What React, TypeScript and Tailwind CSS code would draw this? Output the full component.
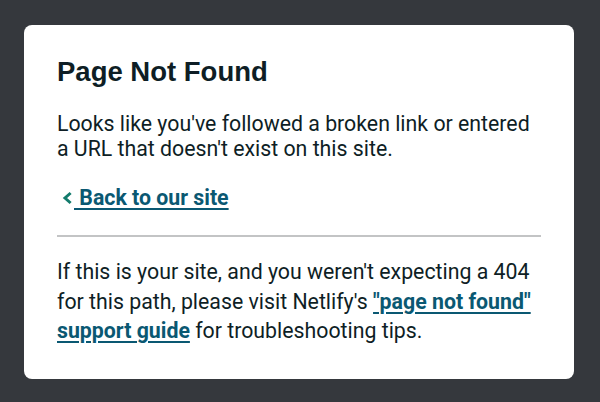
import React from 'react';

const App = () => {
  return (
    <div className="min-h-[402px] w-full bg-[#35383d] pl-6 pr-[26px] pt-[25px] pb-[22px]">
      <div className="rounded-lg bg-white px-[33px] pt-[31px] pb-[33px] text-[#0e1e25]">
        <h1 className="text-[27.5px] font-bold leading-8 font-['Liberation_Sans',Arial,sans-serif]">
          Page Not Found
        </h1>
        <p className="mt-[23px] text-[21.3px] leading-[25px] font-['Roboto',sans-serif]">
          Looks like you've followed a broken link or entered a URL that doesn't exist on this site.
        </p>
        <p className="mt-[23px] text-[21.3px] leading-[26px] font-['Roboto',sans-serif]">
          <a href="/" className="inline-flex items-center font-bold text-[#0a5872]">
            <svg className="ml-[4px] mr-[2px] h-[12px] w-[11px] overflow-visible" viewBox="0 0 11 12" fill="none">
              <path d="M8.5 2L4 6L8.5 10" stroke="#137b6c" strokeWidth="3" strokeLinecap="square" />
            </svg>
            <span className="underline decoration-2 underline-offset-[3px]">&nbsp;Back to our site</span>
          </a>
        </p>
        <hr className="mt-[24px] border-t-2 border-[#c3c4c5]" />
        <p className="mt-[20px] text-[21.3px] leading-[29.5px] font-['Roboto',sans-serif]">
          If this is your site, and you weren't expecting a 404 for this path, please visit Netlify's{' '}
          <a href="#" className="font-bold text-[#0a5872] underline decoration-2 underline-offset-[3px]">
            "page not found" support guide
          </a>{' '}
          for troubleshooting tips.
        </p>
      </div>
    </div>
  );
};

export default App;
